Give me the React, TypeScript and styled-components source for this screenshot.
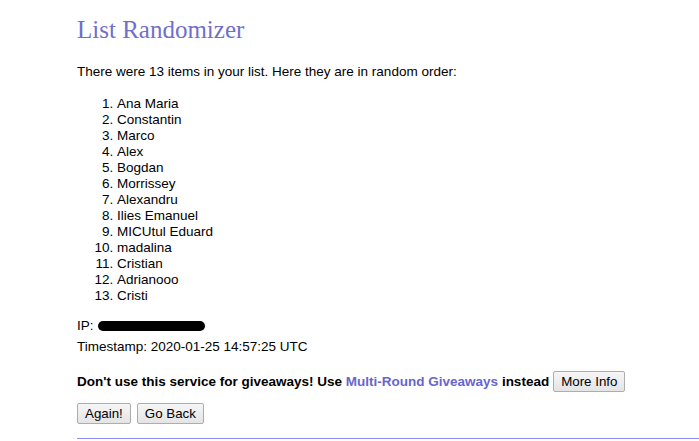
import * as React from "react";
import styled, { createGlobalStyle } from "styled-components";

const GlobalStyle = createGlobalStyle`
  body {
    margin: 0;
    background: #ffffff;
    color: #000000;
    font-family: "Liberation Sans", Arial, sans-serif;
  }
`;

const Page = styled.div`
  padding: 0 0 0 77px;
  font-size: 13.5px;
  line-height: 16px;
`;

const Title = styled.h1`
  margin: 15px 0 0;
  font-family: "Liberation Serif", Georgia, serif;
  font-weight: normal;
  font-size: 25px;
  line-height: 30px;
  color: #6f6fcc;
`;

const Text = styled.p<{ $top?: number }>`
  margin: ${(p) => p.$top ?? 0}px 0 0;
`;

const List = styled.ol`
  margin: 16px 0 0;
  padding-left: 40px;
`;

const Redacted = styled.span`
  display: inline-block;
  width: 107px;
  height: 10px;
  border-radius: 5px;
  background: #000;
  vertical-align: -1px;
  margin-left: 4px;
`;

const Notice = styled.div`
  margin-top: 16px;
  display: flex;
  align-items: center;
  gap: 4px;
  font-weight: bold;
`;

const Link = styled.a`
  color: #6666cc;
  text-decoration: none;
`;

const Buttons = styled.div`
  margin-top: 11px;
  display: flex;
  gap: 6px;
`;

const Button = styled.button`
  font-family: "Liberation Sans", Arial, sans-serif;
  font-size: 13.33px;
  height: 21px;
  padding: 0 7px;
  color: #000;
  background: linear-gradient(#f6f6f6, #e4e4e4);
  border: 1px solid #adadad;
  border-radius: 2px;
`;

const Rule = styled.div`
  margin-top: 14px;
  height: 1px;
  background: #8c8cf8;
`;

const items = [
  "Ana Maria",
  "Constantin",
  "Marco",
  "Alex",
  "Bogdan",
  "Morrissey",
  "Alexandru",
  "Ilies Emanuel",
  "MICUtul Eduard",
  "madalina",
  "Cristian",
  "Adrianooo",
  "Cristi",
];

const App = () => {
  return (
    <Page>
      <GlobalStyle />
      <Title>List Randomizer</Title>
      <Text $top={19}>
        There were 13 items in your list. Here they are in random order:
      </Text>
      <List>
        {items.map((item) => (
          <li key={item}>{item}</li>
        ))}
      </List>
      <Text $top={14}>
        IP:
        <Redacted />
      </Text>
      <Text $top={5}>Timestamp: 2020-01-25 14:57:25 UTC</Text>
      <Notice>
        <span>
          Don't use this service for giveaways! Use{" "}
          <Link href="#">Multi-Round Giveaways</Link> instead
        </span>
        <Button>More Info</Button>
      </Notice>
      <Buttons>
        <Button>Again!</Button>
        <Button>Go Back</Button>
      </Buttons>
      <Rule />
    </Page>
  );
};

export default App;
